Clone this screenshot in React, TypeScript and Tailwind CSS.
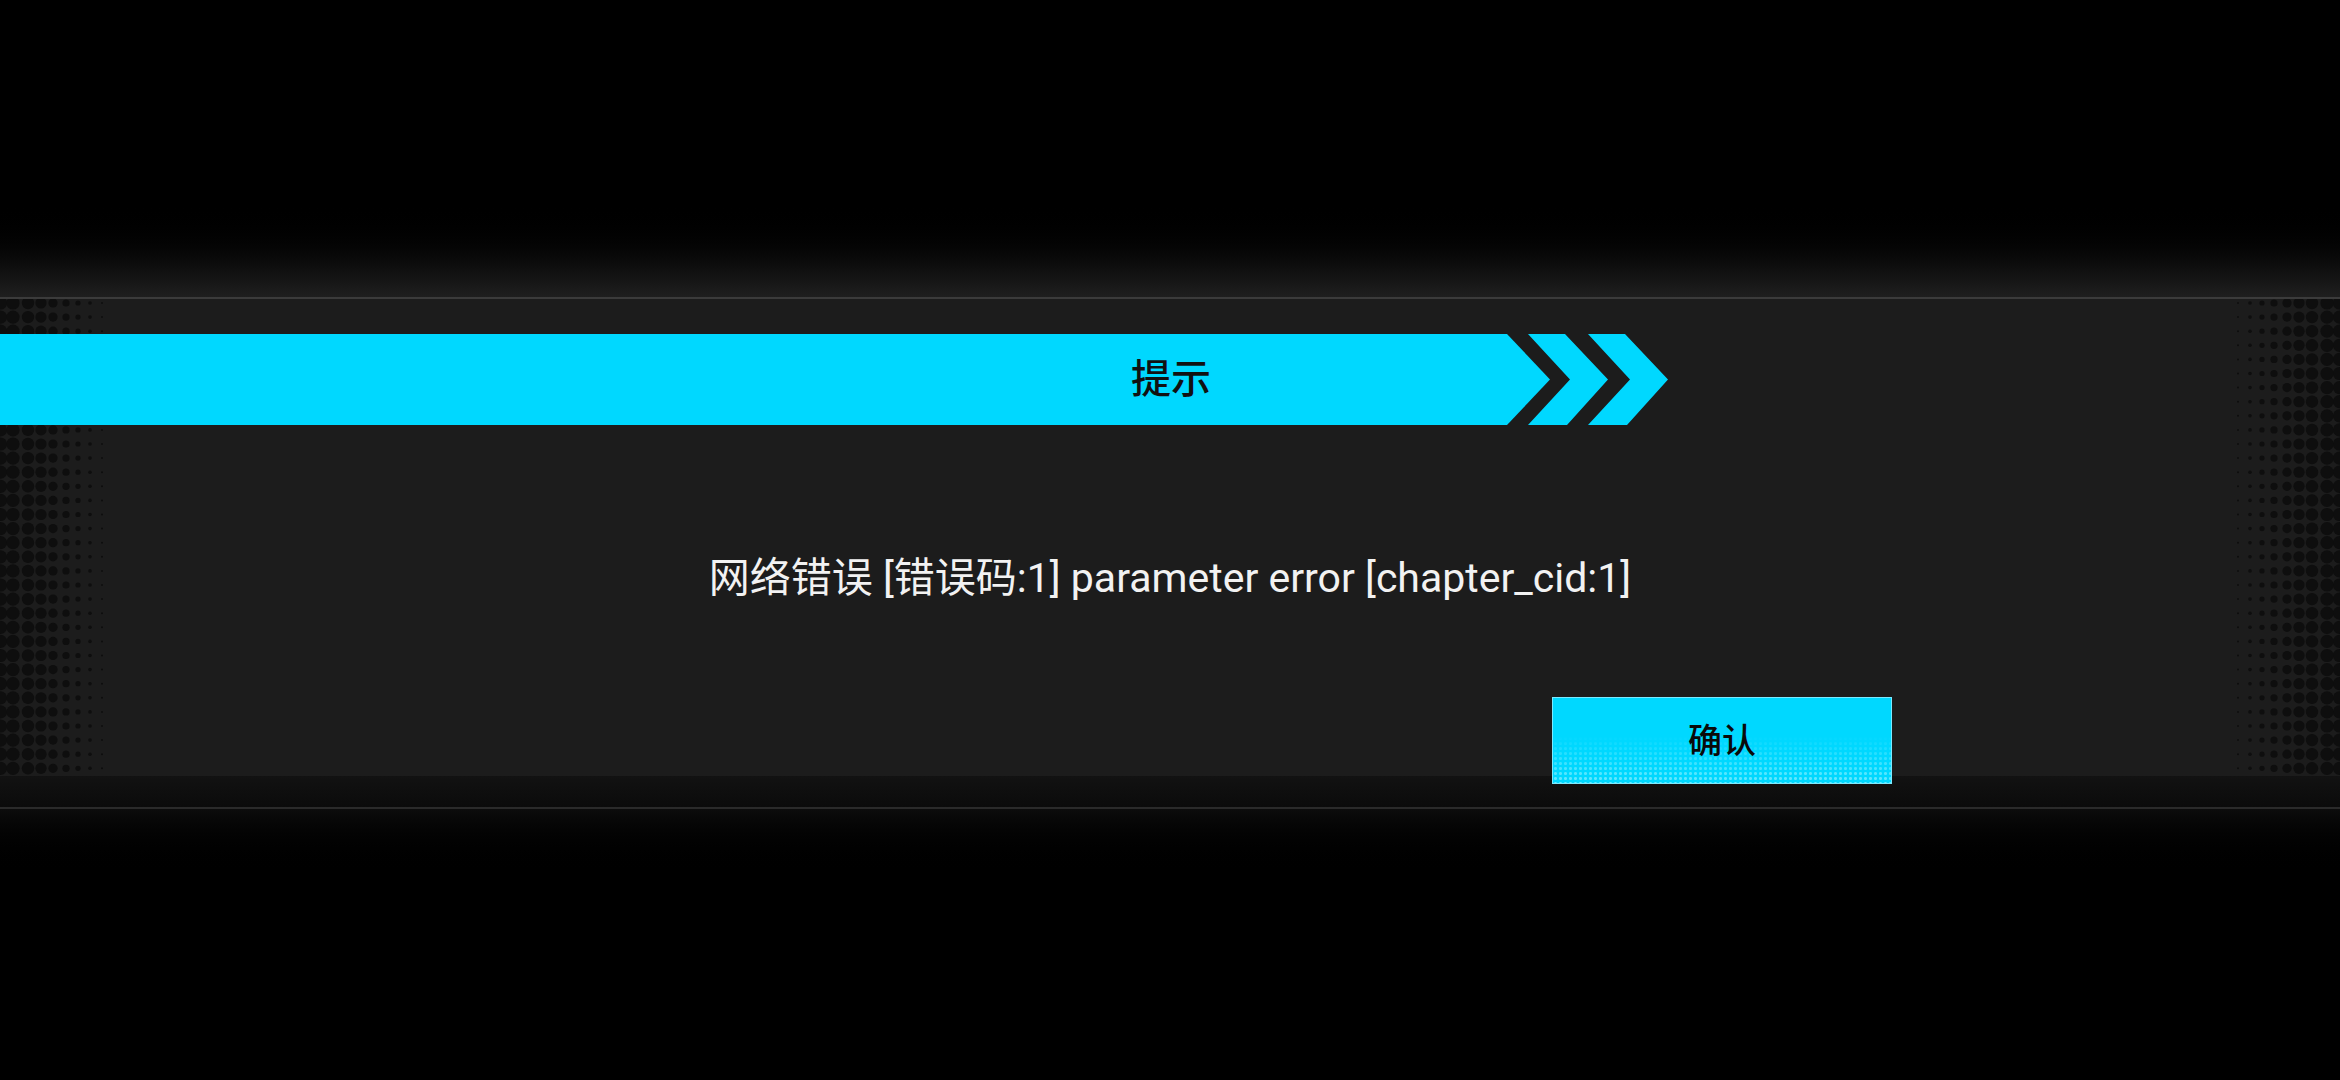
import React from 'react';

const FONT = { fontFamily: '"Roboto", "Noto Sans CJK SC", sans-serif' };

const ROWS = Array.from({ length: 34 }, (_, i) => 4 + i * 14.1);
const LEFT_COLS = [
  { x: 0.5, r: 6.6 },
  { x: 13, r: 6.6 },
  { x: 28, r: 6.2 },
  { x: 41, r: 5.6 },
  { x: 53, r: 4.6 },
  { x: 66, r: 3.6 },
  { x: 78, r: 2.6 },
  { x: 90, r: 1.8 },
  { x: 102, r: 1 },
];

function Halftone({ side }: { side: 'left' | 'right' }) {
  const w = 112;
  return (
    <svg
      width={w}
      height={490}
      viewBox={`0 0 ${w} 490`}
      className={side === 'left' ? 'absolute left-0 top-0' : 'absolute right-0 top-0'}
    >
      {ROWS.map((y) =>
        LEFT_COLS.map((c) => (
          <circle
            key={`${y}-${c.x}`}
            cx={side === 'left' ? c.x : w - c.x}
            cy={y}
            r={c.r}
            fill="#0e0e0e"
          />
        )),
      )}
    </svg>
  );
}

function Chevrons() {
  return (
    <svg width={170} height={91} viewBox="0 0 170 91" className="shrink-0">
      <polygon points="0,0 43,45.5 0,91" fill="#00d8ff" />
      <polygon points="21,0 58,0 101,45.5 60,91 21,91 63,45.5" fill="#00d8ff" />
      <polygon points="81,0 118,0 161,45.5 120,91 81,91 123,45.5" fill="#00d8ff" />
    </svg>
  );
}

export default function App() {
  return (
    <div className="w-[2340px] h-[1080px] bg-black flex flex-col overflow-hidden" style={FONT}>
      <div className="h-[200px] shrink-0 bg-black" />
      <div className="h-[97px] shrink-0 bg-gradient-to-b from-black to-[#1f1f1f]" />
      <div className="h-[2px] shrink-0 bg-[#3b3b3b]" />

      <div className="relative h-[477px] shrink-0 bg-[#1c1c1c] flex flex-col">
        <Halftone side="left" />
        <Halftone side="right" />

        <div className="relative z-10 mt-[35px] flex h-[91px]">
          <div className="flex h-full w-[1507px] items-center justify-end bg-[#00d8ff] pr-[296px]">
            <span className="text-[40px] font-medium leading-none text-[#111111]">提示</span>
          </div>
          <Chevrons />
        </div>

        <p className="relative z-10 mt-[127px] text-center text-[41px] leading-[52px] text-[#f2f2f2]">
          网络错误 [错误码:1] parameter error [chapter_cid:1]
        </p>

        <div className="relative z-20 mt-[93px] flex pl-[1552px]">
          <button
            type="button"
            className="relative flex h-[87px] w-[340px] items-center justify-center overflow-hidden border border-[#7aeaff] bg-[#00d8ff]"
          >
            <span className="absolute inset-x-0 bottom-0 h-[55%] bg-[radial-gradient(circle,rgba(190,248,255,0.55)_1.2px,transparent_1.8px)] bg-[length:5px_5px] [mask-image:linear-gradient(to_bottom,transparent,black)]" />
            <span className="relative text-[34px] font-medium leading-none text-[#0a0a0a]">确认</span>
          </button>
        </div>
      </div>

      <div className="h-[31px] shrink-0 bg-gradient-to-b from-[#121212] to-[#0b0b0b]" />
      <div className="h-[2px] shrink-0 bg-[#2a2a2a]" />
      <div className="h-[70px] shrink-0 bg-gradient-to-b from-[#0c0c0c] to-black" />
      <div className="flex-1 bg-black" />
    </div>
  );
}
